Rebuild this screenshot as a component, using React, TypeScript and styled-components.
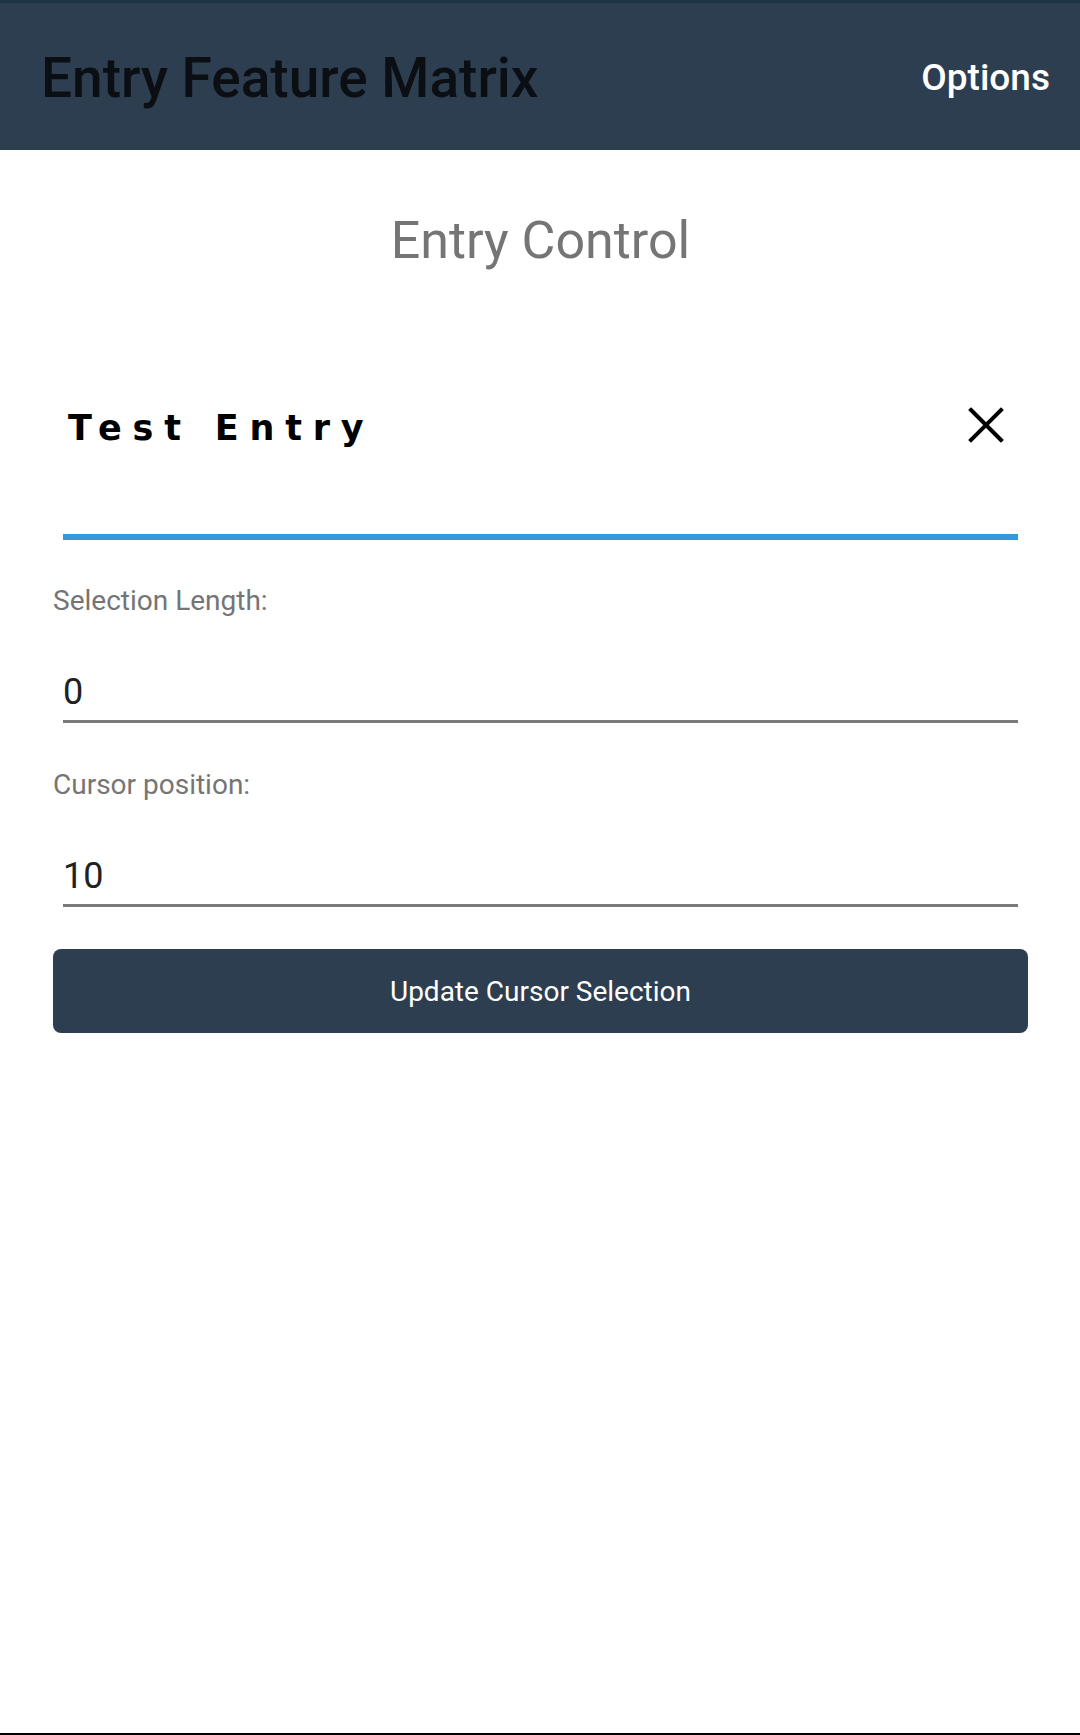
import React from "react";
import styled, { createGlobalStyle } from "styled-components";

const GlobalStyle = createGlobalStyle`
  html, body {
    margin: 0;
    padding: 0;
    background: #ffffff;
  }
  body {
    font-family: Roboto, "Noto Sans", sans-serif;
  }
  * { box-sizing: border-box; }
`;

const Page = styled.div`
  min-height: 1735px;
  display: flex;
  flex-direction: column;
  background: #ffffff;
`;

const Header = styled.header`
  height: 150px;
  border-top: 3px solid #1e3246;
  background: #2d3e50;
  display: flex;
  justify-content: space-between;
  align-items: flex-start;
  padding: 0 30px 0 41px;
`;

const HeaderTitle = styled.h1`
  margin: 48px 0 0;
  font-family: Roboto, sans-serif;
  font-weight: 500;
  font-size: 55px;
  line-height: 1;
  color: #0b0e12;
`;

const HeaderAction = styled.button`
  margin: 56px 0 0;
  padding: 0;
  border: 0;
  background: transparent;
  font-family: Roboto, sans-serif;
  font-weight: 500;
  font-size: 37px;
  line-height: 1;
  color: #ffffff;
`;

const Content = styled.main`
  display: flex;
  flex-direction: column;
  padding: 0 52px 0 53px;
`;

const PageTitle = styled.h2`
  margin: 65px 0 0;
  text-align: center;
  font-family: Roboto, sans-serif;
  font-weight: 400;
  font-size: 52px;
  line-height: 1;
  color: #757575;
`;

const EntryRow = styled.div`
  margin: 113px 10px 0;
  height: 160px;
  border-bottom: 6px solid #3498db;
  display: flex;
  justify-content: space-between;
  align-items: flex-start;
  padding: 0 14px 0 5px;
`;

const EntryText = styled.span`
  margin-top: 31px;
  font-family: "DejaVu Sans", Verdana, sans-serif;
  font-weight: 700;
  font-size: 35px;
  line-height: 1;
  letter-spacing: 10.8px;
  color: #000000;
`;

const ClearButton = styled.button`
  margin-top: 27px;
  padding: 0;
  border: 0;
  background: transparent;
  width: 36px;
  height: 36px;
  display: flex;
  svg { display: block; }
`;

const FieldLabel = styled.label<{ $gap: number }>`
  margin-top: ${(p) => p.$gap}px;
  font-family: Roboto, sans-serif;
  font-size: 28px;
  line-height: 1;
  color: #757575;
`;

const Field = styled.div<{ $gap: number }>`
  margin: ${(p) => p.$gap}px 10px 0;
  height: 60px;
  padding-top: 11px;
  border-bottom: 3px solid #7a7a7a;
  font-family: Roboto, sans-serif;
  font-size: 36px;
  line-height: 1;
  color: #212121;
`;

const ActionButton = styled.button`
  margin-top: 42px;
  height: 84px;
  border: 0;
  border-radius: 8px;
  background: #2d3e50;
  color: #ffffff;
  font-family: Roboto, sans-serif;
  font-size: 28px;
  display: flex;
  align-items: center;
  justify-content: center;
`;

const Spacer = styled.div`
  flex: 1;
`;

const NavEdge = styled.div`
  height: 2px;
  background: #000000;
`;

export default function App() {
  return (
    <Page>
      <GlobalStyle />
      <Header>
        <HeaderTitle>Entry Feature Matrix</HeaderTitle>
        <HeaderAction>Options</HeaderAction>
      </Header>
      <Content>
        <PageTitle>Entry Control</PageTitle>
        <EntryRow>
          <EntryText>Test Entry</EntryText>
          <ClearButton aria-label="Clear">
            <svg width="36" height="36" viewBox="0 0 36 36">
              <path
                d="M3 3 L33 33 M33 3 L3 33"
                stroke="#000"
                strokeWidth="4"
                strokeLinecap="square"
                fill="none"
              />
            </svg>
          </ClearButton>
        </EntryRow>
        <FieldLabel $gap={47}>Selection Length:</FieldLabel>
        <Field $gap={48}>0</Field>
        <FieldLabel $gap={48}>Cursor position:</FieldLabel>
        <Field $gap={48}>10</Field>
        <ActionButton>Update Cursor Selection</ActionButton>
      </Content>
      <Spacer />
      <NavEdge />
    </Page>
  );
}
